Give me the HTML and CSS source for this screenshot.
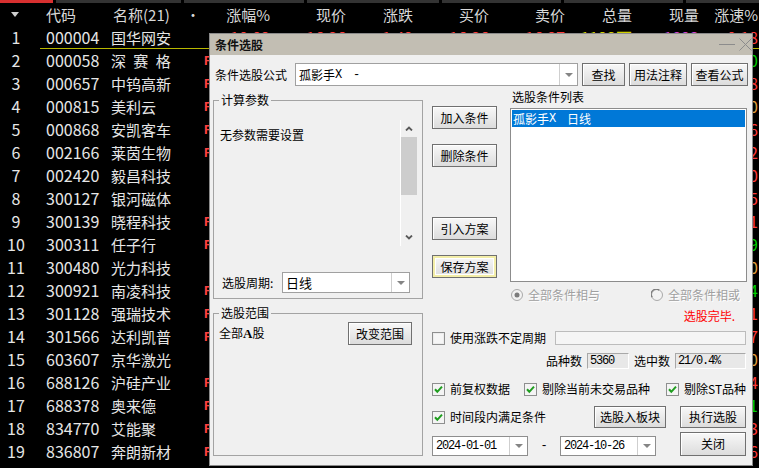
FILE: index.html
```html
<!DOCTYPE html>
<html lang="zh">
<head>
<meta charset="utf-8">
<title>条件选股</title>
<link rel="stylesheet" href="styles.css">
</head>
<body>
<div class="screen">
  <div class="tabs"><span class="t1"></span><span class="t2"></span><span class="t3"></span><span class="t4"></span><span class="t5"></span><span class="t6"></span><span class="t7"></span></div>
  <div class="grid head">
    <span class="n"><i class="tri"></i></span>
    <span class="code">代码</span>
    <span class="name">名称(21)</span>
    <span class="dot">•</span>
    <span></span>
    <span class="v">涨幅%</span>
    <span class="v">现价</span>
    <span class="v">涨跌</span>
    <span class="v">买价</span>
    <span class="v">卖价</span>
    <span class="v">总量</span>
    <span class="v">现量</span>
    <span class="v">涨速%</span>
  </div>
  <div class="grid row sel">
    <span class="n">1</span><span class="code">000004</span><span class="name">国华网安</span><span></span><span></span>
    <span class="v up">10.02</span><span class="v up">16.36</span><span class="v up">1.49</span><span class="v up">16.36</span><span class="v up">16.37</span><span class="v yl">1123万</span><span class="v mg">1893</span><span class="v up">0.18</span>
  </div>
  <div class="grid row"><span class="n">2</span><span class="code">000058</span><span class="name sp">深 赛 格</span><span></span><span class="r">R</span><span class="v spd dn">-0.10</span></div>
  <div class="grid row"><span class="n">3</span><span class="code">000657</span><span class="name">中钨高新</span><span></span><span class="r">R</span><span class="v spd up">0.08</span></div>
  <div class="grid row"><span class="n">4</span><span class="code">000815</span><span class="name">美利云</span><span></span><span class="r">R</span><span class="v spd or">0.00</span></div>
  <div class="grid row"><span class="n">5</span><span class="code">000868</span><span class="name">安凯客车</span><span></span><span class="r">R</span><span class="v spd up">0.16</span></div>
  <div class="grid row"><span class="n">6</span><span class="code">002166</span><span class="name">莱茵生物</span><span></span><span class="r">R</span><span class="v spd up">0.12</span></div>
  <div class="grid row"><span class="n">7</span><span class="code">002420</span><span class="name">毅昌科技</span><span></span><span></span><span class="v spd up">0.20</span></div>
  <div class="grid row"><span class="n">8</span><span class="code">300127</span><span class="name">银河磁体</span><span></span><span></span><span class="v spd up">0.05</span></div>
  <div class="grid row"><span class="n">9</span><span class="code">300139</span><span class="name">晓程科技</span><span></span><span class="r">R</span><span class="v spd up">0.31</span></div>
  <div class="grid row"><span class="n">10</span><span class="code">300311</span><span class="name">任子行</span><span></span><span class="r">R</span><span class="v spd dn">-0.09</span></div>
  <div class="grid row"><span class="n">11</span><span class="code">300480</span><span class="name">光力科技</span><span></span><span></span><span class="v spd or">0.00</span></div>
  <div class="grid row"><span class="n">12</span><span class="code">300921</span><span class="name">南凌科技</span><span></span><span class="r">R</span><span class="v spd dn">-0.14</span></div>
  <div class="grid row"><span class="n">13</span><span class="code">301128</span><span class="name">强瑞技术</span><span></span><span class="r">R</span><span class="v spd up">0.11</span></div>
  <div class="grid row"><span class="n">14</span><span class="code">301566</span><span class="name">达利凯普</span><span></span><span class="r">R</span><span class="v spd up">0.07</span></div>
  <div class="grid row"><span class="n">15</span><span class="code">603607</span><span class="name">京华激光</span><span></span><span></span><span class="v spd or">0.00</span></div>
  <div class="grid row"><span class="n">16</span><span class="code">688126</span><span class="name">沪硅产业</span><span></span><span class="r">R</span><span class="v spd up">0.04</span></div>
  <div class="grid row"><span class="n">17</span><span class="code">688378</span><span class="name">奥来德</span><span></span><span class="r">R</span><span class="v spd dn">-0.21</span></div>
  <div class="grid row"><span class="n">18</span><span class="code">834770</span><span class="name">艾能聚</span><span></span><span class="r">R</span><span class="v spd up">0.13</span></div>
  <div class="grid row"><span class="n">19</span><span class="code">836807</span><span class="name">奔朗新材</span><span></span><span class="r">R</span><span class="v spd up">0.26</span></div>
  <div class="grid row"><span class="n">20</span><span class="code">873001</span><span class="name">国义招标</span><span></span><span></span><span class="v spd up">0.10</span></div>
</div>

<div class="dlg">
  <div class="titlebar">
    <span class="ttl">条件选股</span>
    <span class="winctl">
      <svg width="16" height="13" viewBox="0 0 16 13"><line x1="0" y1="6.5" x2="16" y2="6.5" stroke="#8c8c8c" stroke-width="1"/></svg>
      <svg width="13" height="13" viewBox="0 0 13 13"><path d="M0.5 0.5L12.5 12.5M12.5 0.5L0.5 12.5" stroke="#8c8c8c" stroke-width="1" fill="none"/></svg>
    </span>
  </div>

  <div class="frow">
    <span class="flbl">条件选股公式</span>
    <div class="combo fcombo"><span class="ctext">孤影手<span class="mono">X  -</span></span><span class="arr"></span></div>
    <button class="btn fb1">查找</button>
    <button class="btn fb2">用法注释</button>
    <button class="btn fb3">查看公式</button>
  </div>

  <div class="main">
    <div class="leftcol">
      <div class="group g1">
        <div class="legend">计算参数</div>
        <div class="panel">
          <div class="ptext">无参数需要设置</div>
          <div class="vscroll">
            <div class="sbbtn"><svg width="8" height="5" viewBox="0 0 8 5"><polyline points="1,4.5 4,1.5 7,4.5" fill="none" stroke="#5a5a5a" stroke-width="1.8"/></svg></div>
            <div class="sbthumb"></div>
            <div class="sbtrack"></div>
            <div class="sbbtn"><svg width="8" height="5" viewBox="0 0 8 5"><polyline points="1,0.5 4,3.5 7,0.5" fill="none" stroke="#5a5a5a" stroke-width="1.8"/></svg></div>
          </div>
        </div>
        <div class="period">
          <span class="plbl">选股周期:</span>
          <div class="combo pcombo"><span class="ctext big">日线</span><span class="arr"></span></div>
        </div>
      </div>
      <div class="group g2">
        <div class="legend">选股范围</div>
        <div class="scope">
          <span>全部<b class="ab">A</b>股</span>
          <button class="btn sbtn">改变范围</button>
        </div>
      </div>
    </div>

    <div class="rightcol">
      <div class="upper">
        <div class="btncol">
          <button class="btn mb b1">加入条件</button>
          <button class="btn mb b2">删除条件</button>
          <button class="btn mb b3">引入方案</button>
          <button class="btn mb b4 focus">保存方案</button>
        </div>
        <div class="listcol">
          <div class="listlbl">选股条件列表</div>
          <div class="listbox">
            <div class="lsel">孤影手<span class="mono">X  </span>日线</div>
          </div>
          <div class="radios">
            <span class="radio r1"><svg width="12" height="12" viewBox="0 0 12 12"><circle cx="6" cy="6" r="5.5" fill="#f2f2f2" stroke="#a9a9a9"/><circle cx="6" cy="6" r="2.5" fill="#7c7c7c"/></svg><span>全部条件相与</span></span>
            <span class="radio r2"><svg width="12" height="12" viewBox="0 0 12 12"><circle cx="6" cy="6" r="5.5" fill="#f2f2f2" stroke="#a9a9a9"/><path d="M1.2 8.2A5 5 0 0 1 8.2 1.2" fill="none" stroke="#7a7a7a" stroke-width="1.2"/></svg><span>全部条件相或</span></span>
          </div>
          <div class="done">选股完毕.</div>
        </div>
      </div>

      <div class="lower">
        <div class="rowuse">
          <span class="cbitem"><svg class="cb" width="13" height="13" viewBox="0 0 13 13"><rect x="0.5" y="0.5" width="12" height="12" fill="#ececec" stroke="#8e8f8f"/><rect x="2" y="2" width="9" height="9" fill="#f6f6f6"/></svg><span>使用涨跌不定周期</span></span>
          <span class="progress"></span>
        </div>
        <div class="rownum">
          <span>品种数</span><span class="numbox nb1">5360</span>
          <span>选中数</span><span class="numbox nb2">21/0.4%</span>
        </div>
        <div class="rowcb">
          <span class="cbitem"><svg class="cb" width="13" height="13" viewBox="0 0 13 13"><rect x="0.5" y="0.5" width="12" height="12" fill="#f4f4f4" stroke="#8e8f8f"/><path d="M3 6.3L5.3 8.8L10 3.6" fill="none" stroke="#1f9d1f" stroke-width="2"/></svg><span>前复权数据</span></span>
          <span class="cbitem ci2"><svg class="cb" width="13" height="13" viewBox="0 0 13 13"><rect x="0.5" y="0.5" width="12" height="12" fill="#f4f4f4" stroke="#8e8f8f"/><path d="M3 6.3L5.3 8.8L10 3.6" fill="none" stroke="#1f9d1f" stroke-width="2"/></svg><span>剔除当前未交易品种</span></span>
          <span class="cbitem ci3"><svg class="cb" width="13" height="13" viewBox="0 0 13 13"><rect x="0.5" y="0.5" width="12" height="12" fill="#f4f4f4" stroke="#8e8f8f"/><path d="M3 6.3L5.3 8.8L10 3.6" fill="none" stroke="#1f9d1f" stroke-width="2"/></svg><span>剔除ST品种</span></span>
        </div>
        <div class="rowa">
          <span class="cbitem"><svg class="cb" width="13" height="13" viewBox="0 0 13 13"><rect x="0.5" y="0.5" width="12" height="12" fill="#f4f4f4" stroke="#8e8f8f"/><path d="M3 6.3L5.3 8.8L10 3.6" fill="none" stroke="#1f9d1f" stroke-width="2"/></svg><span>时间段内满足条件</span></span>
          <button class="btn ab1">选股入板块</button>
          <button class="btn ab2">执行选股</button>
        </div>
        <div class="rowb">
          <div class="combo date"><span class="ctext mono">2024-01-01</span><span class="arr"></span></div>
          <span class="dash">-</span>
          <div class="combo date"><span class="ctext mono">2024-10-26</span><span class="arr"></span></div>
          <button class="btn closebtn">关闭</button>
        </div>
      </div>
    </div>
  </div>
</div>
</body>
</html>
```

FILE: styles.css
```css
* { box-sizing: border-box; }
html, body { margin: 0; padding: 0; }
body {
  width: 759px;
  height: 468px;
  overflow: hidden;
  background: #000;
  position: relative;
  font-family: "Noto Sans CJK SC", "Noto Sans", sans-serif;
}

/* ---------- quote list ---------- */
.tabs { display: flex; gap: 3px; height: 3px; }
.tabs span { background: #333; }
.tabs .t1 { width: 53px; background: #d83030; }
.tabs .t2 { width: 125px; }
.tabs .t3 { width: 120px; }
.tabs .t4 { width: 132px; }
.tabs .t5 { width: 119px; }
.tabs .t6 { width: 119px; }
.tabs .t7 { flex: 1; }

.grid {
  display: grid;
  grid-template-columns: 32px 79px 72px 20px 10px 57px 76px 67px 76px 76px 67px 67px 59px;
  height: 23px;
  align-items: center;
  white-space: nowrap;
}
.head { color: #d8d8d8; font-size: 15px; line-height: 23px; }
.head .code { padding-left: 14px; }
.head .name { padding-left: 2px; }
.head .n { display: flex; justify-content: center; }
.tri {
  display: block;
  width: 0; height: 0;
  border-left: 4px solid transparent;
  border-right: 4px solid transparent;
  border-top: 5px solid #cfcfcf;
  margin-right: 2px;
}
.dot { text-align: center; font-size: 14px; }
.v { text-align: right; }

.row { color: #e6e6e6; font-size: 16px; line-height: 23px; }
.row .n { text-align: center; }
.row .code { padding-left: 14px; }
.row .name { font-size: 15px; }
.row .name.sp { word-spacing: 4px; }
.row .r { color: #ff4040; font: 700 13px "Liberation Sans", sans-serif; padding-left: 1px; }
.row .spd { grid-column: 13; }
.row.sel {
  background: linear-gradient(#b8b800, #b8b800) 40px 22px / 719px 1px no-repeat;
}
.up { color: #ff3c3c; }
.dn { color: #00d000; }
.or { color: #e0a040; }
.yl { color: #d0d000; }
.mg { color: #d040d0; }

/* ---------- dialog ---------- */
.dlg {
  position: absolute;
  left: 209px;
  top: 33px;
  width: 544px;
  height: 433px;
  border: 1px solid #8a8a8a;
  background: #f0f0f0;
  font-family: "Noto Sans CJK SC", sans-serif;
  font-size: 12px;
  line-height: 14px;
  color: #000;
}
.titlebar {
  height: 21px;
  background: #c2beb3;
  display: flex;
  align-items: center;
  padding-left: 5px;
}
.ttl { font-weight: 700; color: #111; }
.winctl { margin-left: auto; display: flex; align-items: center; gap: 4px; }
.winctl svg { display: block; }

.mono {
  font-family: "Liberation Mono", monospace;
  font-size: 12px;
  letter-spacing: -1.2px;
  white-space: pre;
}

.btn {
  font-family: inherit;
  font-size: 12px;
  line-height: 14px;
  color: #000;
  border: 1px solid #707070;
  background: linear-gradient(#f8f8f8, #dcdcdc);
  box-shadow: inset 1px 1px 0 #fff;
  padding: 0;
  margin: 0;
  display: flex;
  align-items: center;
  justify-content: center;
  height: 23px;
}
.btn.focus { box-shadow: inset 0 0 0 2px #f3eea8, inset 0 0 0 3px #fff; }

.combo {
  display: flex;
  background: #fff;
  border: 1px solid #a0a0a0;
  height: 100%;
}
.combo .ctext { flex: 1; padding-left: 3px; display: flex; align-items: center; white-space: pre; }
.combo .ctext.big { font-size: 13px; }
.combo .arr {
  width: 18px;
  border-left: 1px solid #cfcfcf;
  display: flex;
  align-items: center;
  justify-content: center;
}
.combo .arr::after {
  content: "";
  border-left: 4px solid transparent;
  border-right: 4px solid transparent;
  border-top: 4px solid #858585;
}

/* formula row */
.frow {
  display: flex;
  align-items: center;
  height: 23px;
  margin-top: 8px;
  padding-left: 5px;
}
.flbl { width: 80px; }
.fcombo { width: 283px; }
.fb1 { width: 43px; margin-left: 4px; }
.fb2 { width: 58px; margin-left: 4px; }
.fb3 { width: 57px; margin-left: 4px; }

/* main */
.main { display: flex; padding-left: 3px; }
.leftcol { width: 210px; }
.group { border: 1px solid #a3a3a3; }
.g1 { margin-top: 14px; height: 199px; }
.g2 { margin-top: 14px; height: 143px; }
.legend {
  margin: -8px 0 0 5px;
  padding: 0 2px;
  background: #f0f0f0;
  width: max-content;
  line-height: 14px;
}
.panel {
  margin: 13px 0 0 4px;
  width: 199px;
  height: 126px;
  display: flex;
}
.ptext { flex: 1; padding: 8px 0 0 2px; }
.vscroll {
  width: 17px;
  border-left: 1px solid #fff;
  display: flex;
  flex-direction: column;
}
.sbbtn { height: 17px; display: flex; align-items: center; justify-content: center; }
.sbbtn svg { display: block; }
.sbthumb { height: 58px; background: #cdcdcd; }
.sbtrack { flex: 1; }

.period {
  display: flex;
  align-items: center;
  height: 21px;
  margin: 26px 0 0 8px;
}
.plbl { width: 60px; }
.pcombo { width: 128px; }

.scope {
  display: flex;
  align-items: center;
  justify-content: space-between;
  height: 23px;
  margin-top: 2px;
  padding: 0 10px 0 5px;
}
.ab { font-family: "Liberation Serif", serif; font-size: 13px; }
.sbtn { width: 64px; }

/* right column */
.rightcol { margin-left: 9px; width: 316px; }
.upper { display: flex; align-items: flex-start; }
.btncol { width: 65px; display: flex; flex-direction: column; }
.b1 { margin-top: 20px; }
.b2 { margin-top: 15px; }
.b3 { margin-top: 50px; }
.b4 { margin-top: 15px; }

.listcol { margin-left: 13px; width: 237px; }
.listlbl { margin-top: 4px; padding-left: 2px; }
.listbox {
  margin-top: 4px;
  height: 174px;
  border: 1px solid #8c8c8c;
  background: #fff;
  padding: 1px;
}
.lsel {
  height: 17px;
  background: #0078d7;
  color: #fff;
  padding-left: 1px;
  display: flex;
  align-items: center;
}
.radios {
  display: flex;
  align-items: center;
  height: 14px;
  margin-top: 6px;
  color: #a0a0a0;
  text-shadow: 1px 1px 0 #fff;
}
.radio { display: flex; align-items: center; gap: 5px; }
.radio svg { display: block; }
.r1 { margin-left: 1px; width: 140px; }
.done {
  margin-top: 7px;
  text-align: right;
  padding-right: 12px;
  color: #f00;
}

.lower { width: 314px; }
.cbitem { display: flex; align-items: center; white-space: nowrap; }
.cb { display: block; margin-right: 5px; flex: none; }

.rowuse { display: flex; align-items: center; height: 14px; margin-top: 8px; }
.progress {
  margin-left: auto;
  width: 191px;
  height: 14px;
  border: 1px solid #bcbcbc;
  background: #f5f5f5;
}
.rownum {
  display: flex;
  justify-content: flex-end;
  align-items: center;
  gap: 5px;
  height: 16px;
  margin-top: 8px;
}
.numbox {
  height: 16px;
  border: 1px solid;
  border-color: #a8a8a8 #ffffff #ffffff #a8a8a8;
  background: #e8e8e8;
  padding-left: 2px;
  display: flex;
  align-items: center;
  font-family: "Liberation Mono", monospace;
  font-size: 12px;
  letter-spacing: -1.2px;
}
.nb1 { width: 42px; }
.nb2 { width: 71px; }

.rowcb { display: flex; align-items: center; height: 14px; margin-top: 13px; }
.ci2 { margin-left: 14px; }
.ci3 { margin-left: 16px; }

.rowa { display: flex; align-items: center; height: 22px; margin-top: 10px; }
.ab1 { width: 72px; height: 22px; margin-left: auto; }
.ab2 { width: 66px; height: 22px; margin-left: 14px; }

.rowb { display: flex; align-items: flex-end; height: 24px; margin-top: 4px; }
.date { width: 96px; height: 20px; border-color: #8e8e8e; }
.date .ctext { font-size: 12px; }
.dash { width: 32px; height: 20px; line-height: 20px; text-align: center; font-family: "Liberation Mono", monospace; }
.closebtn { width: 66px; height: 24px; margin-left: auto; }
```
